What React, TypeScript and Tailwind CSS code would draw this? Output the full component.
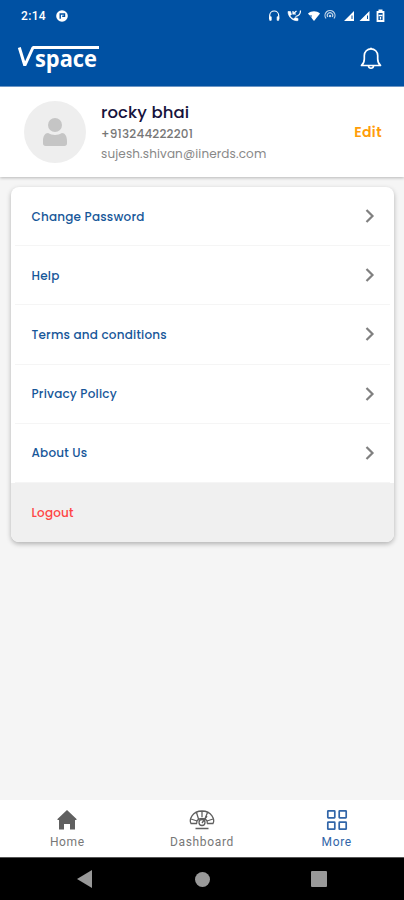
const poppins = "font-['Poppins','Open_Sans',sans-serif]";

const menuItems = [
  "Change Password",
  "Help",
  "Terms and conditions",
  "Privacy Policy",
  "About Us",
];

function StatusIcons() {
  return (
    <svg width="120" height="16" viewBox="267 7 120 16" fill="none" stroke="white">
      <path d="M269.7 18v-3.500a4.500 4.500 0 0 1 9 0V18" strokeWidth="1.200" />
      <path d="M269.700 15.800h1.500v3.500h-1.500zM277.200 15.800h1.500v3.500h-1.500z" fill="white" strokeWidth=".8" />
      <path d="M288 10.500h2.500l1 3-1.600 1.200a10 10 0 0 0 3.600 3.300l1.500-1.500 3 .9v2.200c-5 .7-10-3.500-10-9.100Z" fill="white" strokeWidth=".6" />
      <path d="M293 10v3h3m-2.500-.5 3-2.500m-1 5.500c3-.5 5-3 5-6" strokeWidth="1.200" />
      <path d="M308 12.500c3.500-3 8.500-3 12 0l-6 7.500Z" fill="white" stroke="none" />
      <path d="M307.500 15h4.500m-3.500 2h3" stroke="#0051a3" strokeWidth="1.200" />
      <path d="M326 17.500a5 5 0 1 1 8 0m-6.200-1.500a2.700 2.700 0 1 1 4.400 0" strokeWidth="1.200" opacity=".75" />
      <circle cx="330" cy="15" r="1.200" fill="white" stroke="none" opacity=".8" />
      <path d="M344 20 354 10v10ZM359.500 20l10-10v10Z" fill="white" stroke="none" />
      <path d="M352 14.500v3.500m15.500-3.500v3.500" stroke="#0051a3" />
      <path d="M378.500 9.500h4M377.500 11h6v9h-6z" strokeWidth="1.800" />
      <path d="M378.500 14.500h4M380.500 16v2.500" strokeWidth="1.300" />
    </svg>
  );
}

function Header() {
  return (
    <header className="h-[87px] shrink-0 border-b border-[#719dce] bg-[#0051a3] text-white">
      <div className="flex h-[31px] items-center pl-[21px] pr-[17px]">
        <span className="font-['Roboto',sans-serif] text-[12px] font-medium leading-4 tracking-[0.35px]">
          2:14
        </span>
        <svg className="ml-[10px]" width="12" height="12" viewBox="0 0 12 12">
          <circle cx="6" cy="6" r="5.800" fill="white" />
          <path d="M4.200 8.700V4h4.300v2.300H6.200" fill="none" stroke="#0051a3" strokeWidth="1.400" />
        </svg>
        <div className="ml-auto">
          <StatusIcons />
        </div>
      </div>
      <div className="flex h-[54px] items-center justify-between pl-[17px] pr-[22px]">
        <svg width="86" height="44" viewBox="0 -7 86 44" fill="none">
          <path d="m2.300 4.500 5.500 18 8.200-18h66" stroke="white" strokeWidth="3" strokeLinejoin="bevel" />
          <text
            x="18"
            y="24"
            textLength="62"
            lengthAdjust="spacingAndGlyphs"
            fill="white"
            className="font-['Open_Sans',sans-serif] text-[24px] font-bold"
          >
            space
          </text>
        </svg>
        <svg width="22" height="24" viewBox="0 0 22 24" fill="none" stroke="white" strokeWidth="1.700">
          <path d="M1.500 19.500c2-1.700 2.800-3 2.800-6.500V9.500a6.700 6.700 0 0 1 13.400 0V13c0 3.500.8 4.800 2.800 6.500Z" strokeLinejoin="round" />
          <path d="M8.500 20c.3 3 4.700 3 5 0M10 2.500h2" />
        </svg>
      </div>
    </header>
  );
}

function Profile() {
  return (
    <section className={`flex h-[90px] shrink-0 items-center bg-white pl-6 pr-[22px] shadow-[0_1px_3px_rgba(0,0,0,0.25)] ${poppins}`}>
      <div className="flex size-[62px] items-center justify-center rounded-full bg-[#eeeeee]">
        <svg width="24" height="28" viewBox="0 0 24 28" fill="#c5c5c5">
          <circle cx="12" cy="7" r="7" />
          <path d="M0 23c0-5 2-8 5-8 4 2.500 10 2.500 14 0 3 0 5 3 5 8v2.500c0 1.500-1 2.500-2.500 2.500h-19C1 28 0 27 0 25.500Z" />
        </svg>
      </div>
      <div className="ml-[15px] flex flex-col whitespace-nowrap">
        <span className="text-[16.500px] font-medium leading-[23px] tracking-[0.1px] text-[#17133d]">rocky bhai</span>
        <span className="text-[12px] font-medium leading-5 tracking-[0.2px] text-[#777777]">+913244222201</span>
        <span className="text-[12px] leading-5 tracking-[0.13px] text-[#888888]">sujesh.shivan@iinerds.com</span>
      </div>
      <button className="ml-auto text-[14px] font-semibold leading-5 tracking-[0.4px] text-[#ff9d0a]">Edit</button>
    </section>
  );
}

function Menu() {
  return (
    <section className={`mx-[10.5px] mt-[10px] h-[355px] shrink-0 overflow-hidden rounded-[8px] bg-white shadow-[0_2px_5px_rgba(0,0,0,0.28)] ${poppins}`}>
      {menuItems.map((label) => (
        <div
          key={label}
          className="mx-1 flex h-[59.2px] items-center justify-between border-b border-[#f5f5f5] pl-[17px] pr-[15px] text-[#175799]"
        >
          <span className="pt-px text-[12px] font-medium leading-5 tracking-[0.2px]">{label}</span>
          <svg width="10" height="14" viewBox="0 0 10 14" fill="none" stroke="#808080" strokeWidth="2.200">
            <path d="m1.500 1 6 6-6 6" />
          </svg>
        </div>
      ))}
      <div className="flex h-[59px] items-center bg-[#f0f0f0] pl-[21px] text-[#ff4444]">
        <span className="pt-px text-[12px] font-medium leading-5 tracking-[0.2px]">Logout</span>
      </div>
    </section>
  );
}

function BottomNav() {
  return (
    <nav className="mt-auto grid h-[57px] shrink-0 grid-cols-3 bg-white pt-[8px] font-['Roboto',sans-serif] text-[12px] leading-[20px] tracking-[0.65px] text-[#777777]">
      <div className="flex flex-col items-center">
        <svg width="24" height="24" viewBox="0 0 24 24" fill="#606060">
          <path d="m12 2 9.500 9v1h-1.500v9.500h-5V16H9v5.500H4V12H2.500v-1Z" />
        </svg>
        <span>Home</span>
      </div>
      <div className="flex flex-col items-center">
        <svg width="28" height="24" viewBox="0 0 28 24" fill="none" stroke="#606060" strokeWidth="1.300">
          <path d="M9 15.500H3C1 12 4 3 14 3s13 9 11 12.500h-6M9 15.500c-1-2 .5-5 5-5s6 3 5 5M8.500 4.500l2 6.500m9-6.500-3 7.500M3 11l6 2m16-2-6 2M14 3v6" />
          <circle cx="14" cy="14.500" r="3" />
          <path d="m14 15 5-7M7.500 20.500h13" />
        </svg>
        <span>Dashboard</span>
      </div>
      <div className="flex flex-col items-center text-[#3165a8]">
        <svg width="22" height="24" viewBox="0 0 22 24" fill="none" stroke="currentColor" strokeWidth="1.700">
          <rect x="1.800" y="2.800" width="7" height="7" rx=".5" />
          <rect x="13.200" y="2.800" width="7" height="7" rx=".5" />
          <rect x="1.800" y="14.200" width="7" height="7" rx=".5" />
          <rect x="13.200" y="14.200" width="7" height="7" rx=".5" />
        </svg>
        <span>More</span>
      </div>
    </nav>
  );
}

export default function App() {
  return (
    <div className="flex h-[900px] w-full flex-col overflow-hidden bg-[#f5f5f5]">
      <Header />
      <Profile />
      <Menu />
      <BottomNav />
      <footer className="flex h-[43px] shrink-0 items-center border-t border-[#555555] bg-black text-[#999999]">
        <svg className="ml-[77px]" width="16" height="18" viewBox="0 0 16 18" fill="currentColor">
          <path d="M15 0v18L0 9Z" />
        </svg>
        <div className="ml-[102px] size-[15px] rounded-full bg-current" />
        <div className="ml-[101px] size-4 rounded-[1px] bg-current" />
      </footer>
    </div>
  );
}
